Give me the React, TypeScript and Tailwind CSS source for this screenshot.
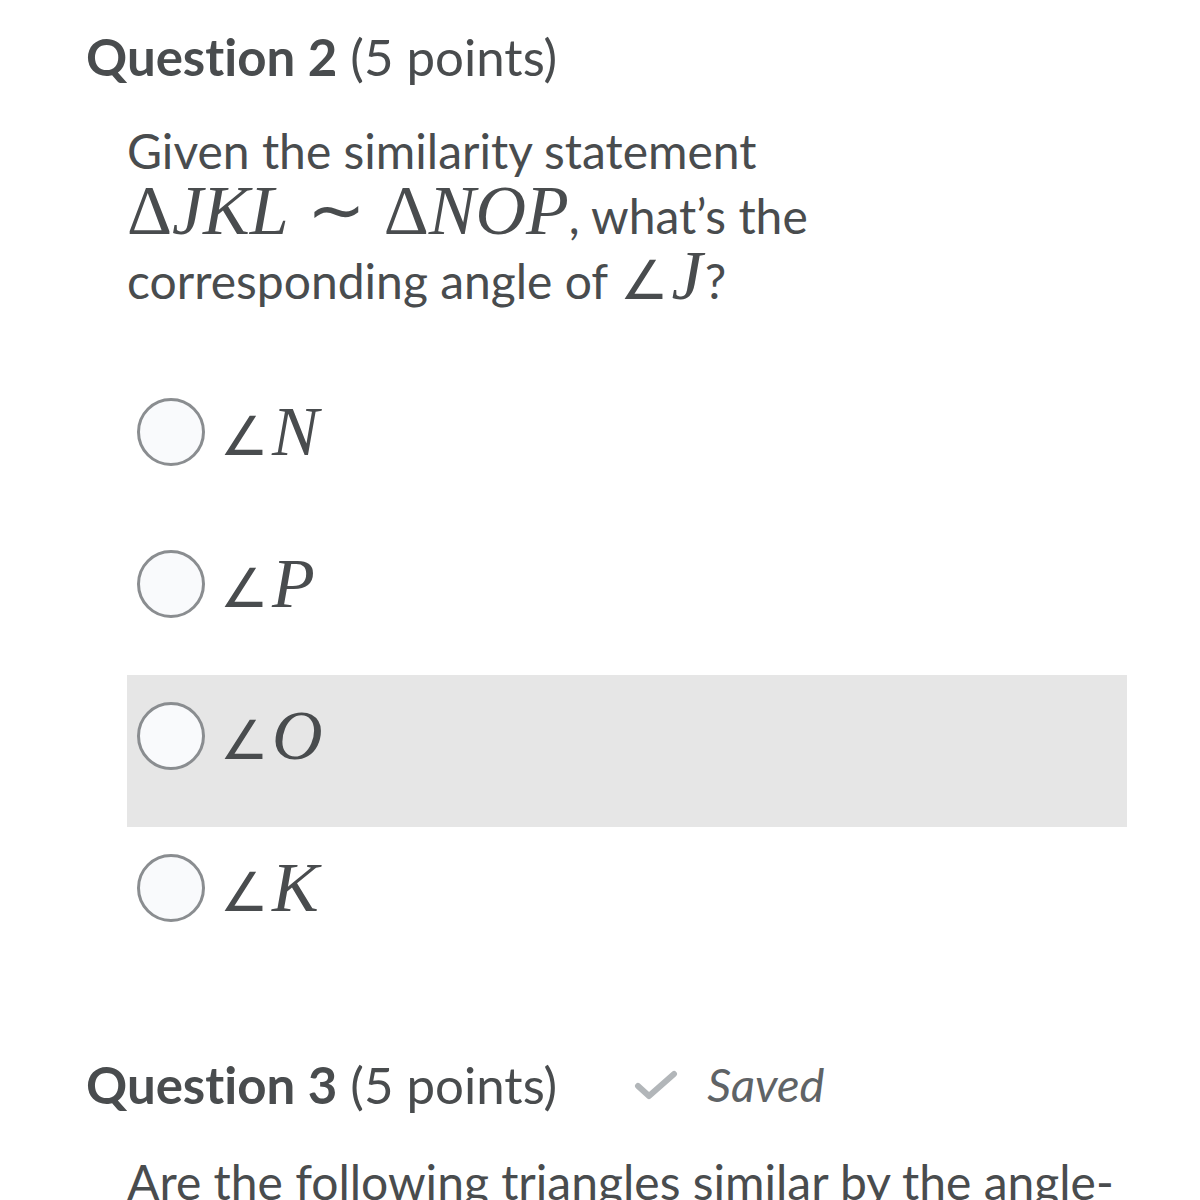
import React from "react";

const options = ["N", "P", "O", "K"];

function Radio() {
    return <span className="block w-[68px] h-[68px] rounded-full border-[3px] border-[#8a8d90] bg-[#f9fafc] shrink-0" />;
}

function Angle() {
    return <span className="text-[54px] mr-[4px]">∠</span>;
}

export default function App() {
    return (
        <div className="w-[1200px] h-[1200px] overflow-hidden bg-white text-[#494c4e] font-['Lato','Noto_Sans',sans-serif] [font-variant-ligatures:none]">
            <div className="pl-[86px] pt-[31px] flex items-center text-[51px] leading-none">
                <span className="font-bold">Question 2</span>
                <span className="ml-[13px]">(5 points)</span>
            </div>

            <div className="pl-[127px] pt-[36px] text-[48px] leading-[65px]">
                <p>Given the similarity statement</p>
                <p>
                    <span className="font-['Liberation_Serif',serif] text-[70px] leading-[40px]">
                        Δ<i>JKL</i>
                        <span className="mx-[18px]">∼</span>
                        Δ<i>NOP</i>
                    </span>
                    , what’s the
                </p>
                <p>
                    corresponding angle of{" "}
                    <span className="font-['Liberation_Serif',serif] text-[70px] leading-[40px]">
                        <Angle />
                        <i>J</i>
                    </span>
                    <span className="ml-[2px]">?</span>
                </p>
            </div>

            {/* Opciones */}
            <div className="mt-[58px] ml-[127px] w-[1000px]">
                {options.map((o, i) => (
                    <div
                        key={o}
                        className={
                            "h-[152px] pb-[30px] flex items-center pl-[10px] " + (i === 2 ? "bg-[#e6e6e6]" : "")
                        }
                    >
                        <Radio />
                        <span className="ml-[15px] font-['Liberation_Serif',serif] text-[70px] leading-none">
                            <Angle />
                            <i>{o}</i>
                        </span>
                    </div>
                ))}
            </div>

            <div className="pl-[86px] mt-[80px] flex items-center text-[51px] leading-none">
                <span className="font-bold">Question 3</span>
                <span className="ml-[13px]">(5 points)</span>
                <svg className="ml-[77px]" width="44" height="30" viewBox="0 0 44 30">
                    <path d="M4 16 L15 26 L40 4" fill="none" stroke="#b2b6b9" strokeWidth="6" strokeLinecap="round" strokeLinejoin="round" />
                </svg>
                <span className="ml-[29px] italic text-[47px] text-[#5f6366]">Saved</span>
            </div>

            <p className="pl-[127px] mt-[39px] text-[48px] leading-[65px] whitespace-nowrap">
                Are the following triangles similar by the angle-
            </p>
        </div>
    );
}
